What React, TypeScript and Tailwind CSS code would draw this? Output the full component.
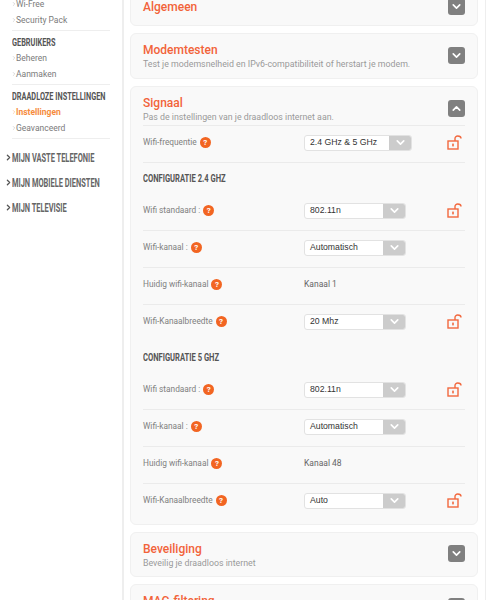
import React from 'react';
import { ChevronDown, ChevronUp, ChevronRight } from 'lucide-react';

// no condensed font installed, so squeeze the bold one
function Cond({ children, scale }: { children: React.ReactNode; scale: string }) {
    return <span className={`inline-block origin-left whitespace-nowrap font-bold ${scale}`}>{children}</span>;
}

function SideLink({ label, active }: { label: string; active?: boolean }) {
    return (
        <div className={`flex items-center h-[16px] text-[8.5px] whitespace-nowrap ${active ? 'text-[#f68b3c] font-bold' : 'text-[#7b7b7b]'}`}>
            <ChevronRight size={6} strokeWidth={1.5} className={`shrink-0 -ml-[1px] -mr-[1px] ${active ? 'text-[#f68b3c]' : 'text-[#999]'}`} />
            {label}
        </div>
    );
}

function SideTitle({ label }: { label: string }) {
    return (
        <div className="h-[14px] flex items-center text-[10.5px] text-[#555]">
            <Cond scale="scale-x-[0.7]">{label}</Cond>
        </div>
    );
}

function SideGroup({ label }: { label: string }) {
    return (
        <div className="flex items-center h-[25px] pl-[4px] text-[12px] text-[#666]">
            <ChevronRight size={9} strokeWidth={3.5} className="shrink-0 text-[#555] -mr-[1px]" />
            <Cond scale="scale-x-[0.62]">{label}</Cond>
        </div>
    );
}

function Help() {
    return (
        <span className="ml-[3px] w-[11px] h-[11px] rounded-full bg-[#f26522] text-white text-[8px] font-bold flex items-center justify-center leading-none shrink-0">
            ?
        </span>
    );
}

function Lock() {
    return (
        <svg width="15" height="15" viewBox="0 0 15 15" fill="none" className="text-[#f2693f] block">
            <rect x="1" y="6" width="10" height="8" stroke="currentColor" strokeWidth="1.4" />
            <path d="M8 6V3.5C8 2 9.2 1 10.7 1S14 1.8 14 3.4" stroke="currentColor" strokeWidth="1.4" />
            <rect x="5.2" y="8.6" width="1.6" height="2.8" fill="currentColor" />
        </svg>
    );
}

function Select({ value, w }: { value: string; w: string }) {
    return (
        <div className={`${w} h-[16px] rounded-[3px] bg-white border border-[#e2e2e2] flex items-center overflow-hidden font-['Liberation_Sans',sans-serif] text-[8.7px] text-[#333]`}>
            <span className="flex-1 pl-[5px] whitespace-nowrap">{value}</span>
            <span className="w-[22px] h-full bg-[#cccccc] flex items-center justify-center">
                <ChevronDown size={13} strokeWidth={3} className="text-white" />
            </span>
        </div>
    );
}

function Row({ label, value, text, w = 'w-[102px]', lock, last }: { label: string; value?: string; text?: string; w?: string; lock?: boolean; last?: boolean }) {
    return (
        <div className={`h-[37px] flex items-center ${last ? 'pb-[4px]' : 'pb-[3px] border-b border-[#ebebeb]'}`}>
            <div className="w-[161px] flex items-center text-[8.3px] text-[#808080] whitespace-nowrap">
                {label}
                <Help />
            </div>
            {text ? (
                <span className="text-[8.5px] text-[#666]">{text}</span>
            ) : (
                <Select value={value || ''} w={w} />
            )}
            {lock && <div className="ml-auto mr-[3px]"><Lock /></div>}
        </div>
    );
}

function Panel({ title, sub, open, children, className = '', toggleTop = 'top-[13px]' }: { title: string; sub?: string; open?: boolean; children?: React.ReactNode; className?: string; toggleTop?: string }) {
    return (
        <section className={`rounded-[6px] bg-[#f9f9f9] border border-[#f0f0f0] px-[12px] ${className}`}>
            <div className="relative pt-[8px]">
                <h2 className="text-[12px] leading-[16px] font-medium text-[#f2633a]">{title}</h2>
                {sub && <p className="text-[8.8px] leading-[12px] text-[#999]">{sub}</p>}
                <span className={`absolute right-[0px] ${toggleTop} w-[17px] h-[17px] rounded-[3px] bg-[#808080] flex items-center justify-center`}>
                    {open ? <ChevronUp size={13} strokeWidth={3} className="text-white" /> : <ChevronDown size={13} strokeWidth={3} className="text-white" />}
                </span>
            </div>
            {children}
        </section>
    );
}

function ConfigTitle({ label }: { label: string }) {
    return (
        <div className="h-[31px] flex items-center text-[11.5px] text-[#555]">
            <Cond scale="scale-x-[0.66]">{label}</Cond>
        </div>
    );
}

export default function App() {
    return (
        <div className="w-[496px] h-[600px] overflow-hidden bg-white flex font-['Roboto','Liberation_Sans',sans-serif]">
            {/* Sidebar */}
            <aside className="w-[124px] h-full shrink-0 border-r-2 border-[#eeeeee]">
                <div className="pl-[12px] pr-[12px] -mt-[4px]">
                    <SideLink label="Wi-Free" />
                    <SideLink label="Security Pack" />
                    <div className="border-b border-[#eeeeee] mt-[2px] mb-[5px]" />
                    <SideTitle label="GEBRUIKERS" />
                    <SideLink label="Beheren" />
                    <SideLink label="Aanmaken" />
                    <div className="border-b border-[#eeeeee] mt-[2px] mb-[5px]" />
                    <SideTitle label="DRAADLOZE INSTELLINGEN" />
                    <SideLink label="Instellingen" active />
                    <SideLink label="Geavanceerd" />
                    <div className="border-b border-[#eeeeee] mt-[2px]" />
                </div>
                <div className="mt-[6px]">
                    <SideGroup label="MIJN VASTE TELEFONIE" />
                    <SideGroup label="MIJN MOBIELE DIENSTEN" />
                    <SideGroup label="MIJN TELEVISIE" />
                </div>
            </aside>

            {/* Main */}
            <main className="w-[362px] shrink-0 border-r border-[#eeeeee] pl-[6px] pr-[7px]">
                <div className="-mt-[10px] flex flex-col gap-[7px]">
                    <Panel title="Algemeen" className="h-[36px]" toggleTop="top-[7px]" />
                    <Panel title="Modemtesten" sub="Test je modemsnelheid en IPv6-compatibiliteit of herstart je modem." className="h-[46px]" />
                    <Panel title="Signaal" sub="Pas de instellingen van je draadloos internet aan." open className="h-[439px]">
                        <div className="mt-[2px] border-t border-[#ebebeb]">
                            <Row label="Wifi-frequentie" value="2.4 GHz & 5 GHz" w="w-[108px]" lock />
                            <ConfigTitle label="CONFIGURATIE 2.4 GHZ" />
                            <Row label="Wifi standaard :" value="802.11n" lock />
                            <Row label="Wifi-kanaal :" value="Automatisch" />
                            <Row label="Huidig wifi-kanaal" text="Kanaal 1" />
                            <Row label="Wifi-Kanaalbreedte" value="20 Mhz" lock last />
                            <ConfigTitle label="CONFIGURATIE 5 GHZ" />
                            <Row label="Wifi standaard :" value="802.11n" lock />
                            <Row label="Wifi-kanaal :" value="Automatisch" />
                            <Row label="Huidig wifi-kanaal" text="Kanaal 48" />
                            <Row label="Wifi-Kanaalbreedte" value="Auto" lock last />
                        </div>
                    </Panel>
                    <Panel title="Beveiliging" sub="Beveilig je draadloos internet" className="h-[45px]" toggleTop="top-[12px]" />
                    <Panel title="MAC-filtering" className="h-[46px]" />
                </div>
            </main>
        </div>
    );
}
